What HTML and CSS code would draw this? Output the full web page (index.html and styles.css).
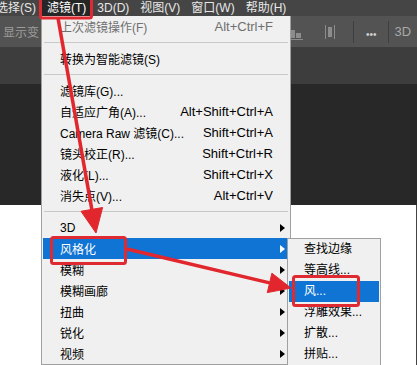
FILE: index.html
```html
<!DOCTYPE html>
<html lang="zh-CN">
<head>
    <meta charset="UTF-8">
    <meta name="viewport" content="width=device-width, initial-scale=1.0">
    <title>滤镜 - 风格化</title>

    <link rel="stylesheet" href="styles.css">
</head>
<body>

    <div class="app">
        <div class="menubar">
            <span class="menubar-item first">选择(S)</span>
            <span class="menubar-item active">滤镜(T)</span>
            <span class="menubar-item">3D(D)</span>
            <span class="menubar-item">视图(V)</span>
            <span class="menubar-item">窗口(W)</span>
            <span class="menubar-item">帮助(H)</span>
        </div>

        <div class="optbar">
            <span class="opt-label">显示变</span>
            <div class="opt-tools">
                <svg class="tool-chart" width="13" height="12" viewBox="0 0 13 12">
                    <rect x="1" y="2" width="4" height="8" fill="#8c8c8c"/>
                    <rect x="6" y="5" width="5" height="5" fill="#8c8c8c"/>
                    <rect x="0" y="11" width="13" height="1" fill="#8c8c8c"/>
                </svg>
                <svg class="tool-bracket" width="11" height="14" viewBox="0 0 11 14">
                    <rect x="0" y="0" width="1" height="14" fill="#8c8c8c"/>
                    <rect x="3" y="2" width="4" height="10" fill="#8c8c8c"/>
                    <rect x="9" y="0" width="1" height="14" fill="#8c8c8c"/>
                </svg>
                <span class="opt-sep"></span>
                <span class="opt-dots">•••</span>
                <span class="opt-sep"></span>
                <span class="opt-3d">3D</span>
            </div>
        </div>

        <div class="tabband"></div>
        <div class="workspace"></div>
        <div class="canvas"></div>
    </div>

    <!-- menu 滤镜 -->
    <div class="menu">
        <div class="item disabled"><span>上次滤镜操作(F)</span><span class="key">Alt+Ctrl+F</span><span></span></div>
        <div class="sep"></div>
        <div class="item"><span>转换为智能滤镜(S)</span><span class="key"></span><span></span></div>
        <div class="sep"></div>
        <div class="item"><span>滤镜库(G)...</span><span class="key"></span><span></span></div>
        <div class="item"><span>自适应广角(A)...</span><span class="key">Alt+Shift+Ctrl+A</span><span></span></div>
        <div class="item"><span>Camera Raw 滤镜(C)...</span><span class="key">Shift+Ctrl+A</span><span></span></div>
        <div class="item"><span>镜头校正(R)...</span><span class="key">Shift+Ctrl+R</span><span></span></div>
        <div class="item"><span>液化(L)...</span><span class="key">Shift+Ctrl+X</span><span></span></div>
        <div class="item"><span>消失点(V)...</span><span class="key">Alt+Ctrl+V</span><span></span></div>
        <div class="sep"></div>
        <div class="item"><span>3D</span><span class="key"></span><span class="sub-arrow"></span></div>
        <div class="item hover"><span>风格化</span><span class="key"></span><span class="sub-arrow"></span></div>
        <div class="item"><span>模糊</span><span class="key"></span><span class="sub-arrow"></span></div>
        <div class="item"><span>模糊画廊</span><span class="key"></span><span class="sub-arrow"></span></div>
        <div class="item"><span>扭曲</span><span class="key"></span><span class="sub-arrow"></span></div>
        <div class="item"><span>锐化</span><span class="key"></span><span class="sub-arrow"></span></div>
        <div class="item"><span>视频</span><span class="key"></span><span class="sub-arrow"></span></div>
    </div>

    <!-- sous-menu 风格化 -->
    <div class="submenu">
        <div class="subitem">查找边缘</div>
        <div class="subitem">等高线...</div>
        <div class="subitem hover">风...</div>
        <div class="subitem">浮雕效果...</div>
        <div class="subitem">扩散...</div>
        <div class="subitem">拼贴...</div>
    </div>

    <!-- annotations rouges -->
    <svg class="marks" width="417" height="365" viewBox="0 0 417 365">
        <g fill="none" stroke="#df2a31" stroke-width="3">
            <rect x="40.5" y="-2" width="51" height="20" rx="2"/>
            <rect x="51.5" y="237.5" width="74" height="26" rx="2"/>
            <rect x="293.5" y="276.5" width="65" height="29" rx="2"/>
        </g>
        <g fill="#e1262d" stroke="#e1262d">
            <line x1="58" y1="18" x2="91.8" y2="209.4" stroke-width="3.5"/>
            <polygon points="96,233 102.6,207.5 81,211.3" stroke-width="1"/>
            <line x1="127" y1="249" x2="269.6" y2="282.9" stroke-width="3.5"/>
            <polygon points="291,288 267.3,292.6 271.9,273.2" stroke-width="1"/>
        </g>
    </svg>

</body>
</html>
```

FILE: styles.css
```css
body {
    font-family: 'Liberation Sans', 'Noto Sans CJK SC', sans-serif;
    margin: 0;
    width: 417px;
    height: 365px;
    overflow: hidden;
    position: relative;
    background-color: #ffffff;
}

.app {
    display: flex;
    flex-direction: column;
    height: 365px;
}

/* barre de menus */
.menubar {
    height: 16px;
    display: flex;
    gap: 1px;
    background-color: #454545;
    color: #e8e8e8;
    font-size: 12px;
    line-height: 16px;
    white-space: nowrap;
}

.menubar-item {
    padding: 0 5px;
}

.menubar-item.first {
    margin-left: -9px;
}

.menubar-item.active {
    background-color: #262626;
    color: #ffffff;
}

/* barre d'options */
.optbar {
    height: 31px;
    display: flex;
    align-items: center;
    background-color: #535353;
    overflow: hidden;
    white-space: nowrap;
}

.opt-label {
    margin-left: 3px;
    font-family: 'Noto Sans CJK SC', sans-serif;
    font-size: 12px;
    color: #9c9c9c;
}

.opt-tools {
    display: flex;
    align-items: center;
    margin-left: 251px;
}

.tool-chart {
    margin-top: 4px;
}

.tool-bracket {
    margin-left: 22px;
}

.opt-sep {
    width: 1px;
    height: 22px;
    background-color: #3e3e3e;
    margin: 0 12px 0 17px;
}

.opt-dots {
    font-size: 10px;
    color: #d0d0d0;
    letter-spacing: 0;
    margin-top: 5px;
}

.opt-dots + .opt-sep {
    margin: 0 6px 0 11px;
}

.opt-3d {
    font-size: 13px;
    color: #a8a8a8;
}

.tabband {
    height: 37px;
    background-color: #3d3d3d;
}

.workspace {
    height: 121px;
    background-color: #282828;
}

.canvas {
    flex: 1;
    background-color: #ffffff;
    border-right: 1px solid #444;
}

/* menu déroulant */
.menu {
    position: absolute;
    left: 41px;
    top: 16px;
    width: 250px;
    box-sizing: border-box;
    padding: 0 1px;
    background-color: #f0f0f0;
    border: 1px solid #a0a0a0;
    border-top: none;
    font-size: 12px;
    color: #000;
}

.item {
    height: 21px;
    display: grid;
    grid-template-columns: 1fr auto 16px;
    align-items: center;
    padding-left: 17px;
    white-space: nowrap;
}

.item .key {
    font-size: 13px;
    text-align: right;
}

.item.disabled {
    color: #6f6f6f;
}

.item.hover {
    background-color: #0f74d3;
    color: #ffffff;
}

.sep {
    height: 11px;
    display: flex;
    align-items: center;
}

.sep::before {
    content: "";
    flex: 1;
    height: 1px;
    margin: 0 1px;
    background-color: #c9c9c9;
}

.sub-arrow {
    width: 0;
    height: 0;
    margin-left: 7px;
    border-left: 5px solid #000;
    border-top: 4.5px solid transparent;
    border-bottom: 4.5px solid transparent;
}

.item.hover .sub-arrow {
    border-left-color: #ffffff;
}

/* sous-menu */
.submenu {
    position: absolute;
    left: 287px;
    top: 238px;
    width: 94px;
    box-sizing: border-box;
    padding: 0 1px;
    background-color: #f0f0f0;
    border: 1px solid #a0a0a0;
    font-size: 12px;
    color: #000;
}

.subitem {
    height: 21px;
    line-height: 21px;
    padding-left: 15px;
    white-space: nowrap;
}

.subitem.hover {
    background-color: #0f74d3;
    color: #ffffff;
}

.marks {
    position: absolute;
    left: 0;
    top: 0;
    pointer-events: none;
}
```
